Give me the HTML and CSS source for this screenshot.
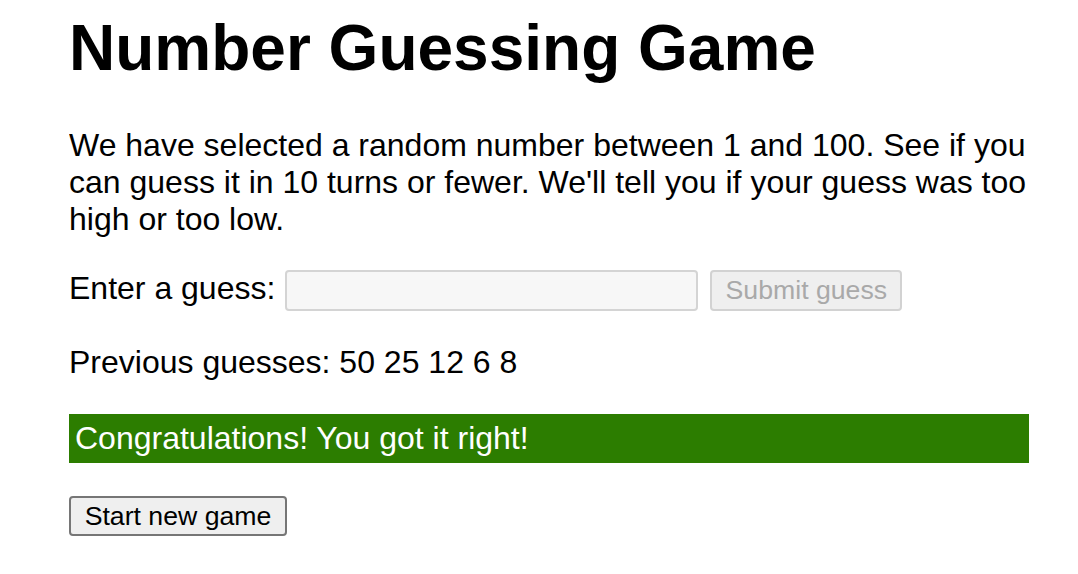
FILE: index.html
```html
<!DOCTYPE html>
<html lang="en">
<head>
<meta charset="utf-8">
<title>Number guessing game</title>
<link rel="stylesheet" href="styles.css">
</head>
<body>
<h1 class="title">Number Guessing Game</h1>
<p class="intro">We have selected a random number between 1 and 100. See if you can guess it in 10 turns or fewer. We'll tell you if your guess was too high or too low.</p>
<div class="form">
  <label class="form-label" for="guessField">Enter a guess:</label>
  <input class="guess-field" type="number" id="guessField" disabled>
  <button class="guess-submit" type="button" disabled>Submit guess</button>
</div>
<div class="result-paras">
  <p class="guesses">Previous guesses: 50 25 12 6 8</p>
  <p class="last-result">Congratulations! You got it right!</p>
</div>
<button class="restart" type="button">Start new game</button>
</body>
</html>
```

FILE: styles.css
```css
html {
  font-family: "Liberation Sans", Arial, sans-serif;
  font-size: 32px;
  color: #000;
  background: #fff;
}

body {
  margin: 0 0 0 69px;
  width: 960px;
}

.title {
  font-size: 64px;
  font-weight: bold;
  margin: 11px 0 42px;
}

.intro {
  margin: 0 0 32px;
}

.form {
  display: flex;
  align-items: flex-start;
}

.form-label {
  margin-right: 10px;
}

.guess-field {
  box-sizing: border-box;
  width: 413px;
  height: 41px;
  margin: 0 12px 0 0;
  border: 2px solid #d4d4d4;
  border-radius: 4px;
  background: #f7f7f7;
  font-family: inherit;
  font-size: 26.67px;
}

.guess-submit {
  box-sizing: border-box;
  width: 192px;
  height: 41px;
  padding: 0;
  border: 2px solid #d2d2d2;
  border-radius: 4px;
  background: #efefef;
  color: #a9a9a9;
  font-family: "Liberation Sans", Arial, sans-serif;
  font-size: 26.67px;
}

.result-paras {
  margin-top: 33px;
}

.guesses {
  margin: 0;
}

.last-result {
  margin: 33px 0 0;
  padding: 6px;
  background: #2c7d00;
  color: #fff;
}

.restart {
  display: block;
  box-sizing: border-box;
  width: 218px;
  height: 40px;
  margin-top: 33px;
  padding: 0 12px;
  border: 2px solid #767676;
  border-radius: 4px;
  background: #efefef;
  color: #000;
  font-family: "Liberation Sans", Arial, sans-serif;
  font-size: 26.67px;
  text-align: center;
}
```
